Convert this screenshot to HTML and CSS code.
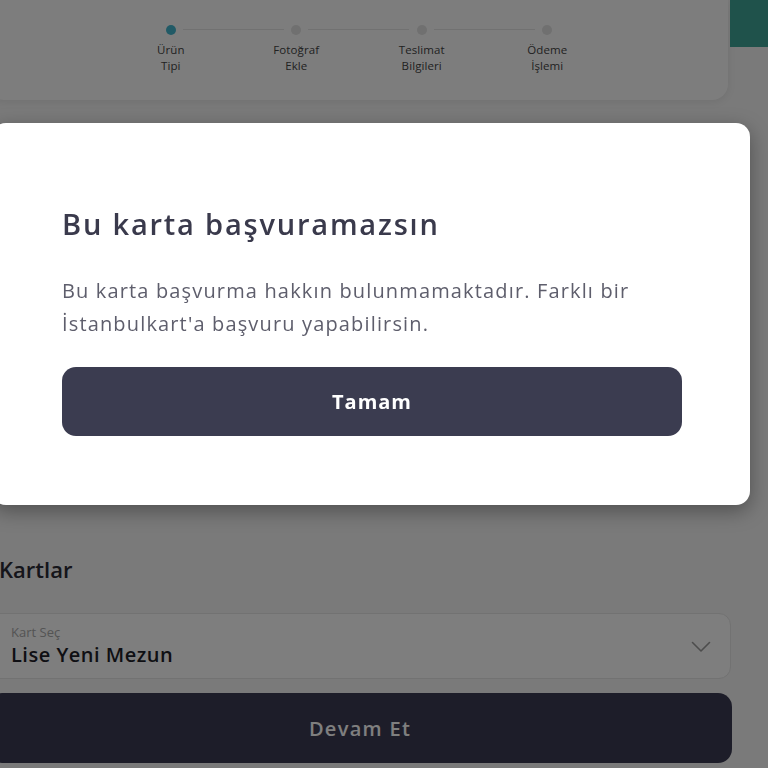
FILE: index.html
```html
<!DOCTYPE html>
<html lang="tr">
<head>
<meta charset="utf-8">
<title>Kart Başvurusu</title>
<link rel="stylesheet" href="styles.css">
</head>
<body>
<div class="layout">
  <main class="main">
    <section class="stepper-card">
      <ol class="stepper">
        <li class="step active"><span class="dot"></span><span class="label">Ürün<br>Tipi</span></li>
        <li class="step"><span class="dot"></span><span class="label">Fotoğraf<br>Ekle</span></li>
        <li class="step"><span class="dot"></span><span class="label">Teslimat<br>Bilgileri</span></li>
        <li class="step last"><span class="dot"></span><span class="label">Ödeme<br>İşlemi</span></li>
      </ol>
    </section>
    <section class="form">
      <h2 class="section-title">Kartlar</h2>
      <div class="select">
        <div class="select-text">
          <span class="select-label">Kart Seç</span>
          <span class="select-value">Lise Yeni Mezun</span>
        </div>
        <svg class="chevron" width="20" height="12" viewBox="0 0 20 12"><path d="M1.5 1.5 L10 10 L18.5 1.5" fill="none" stroke="#9a9a9a" stroke-width="1.6" stroke-linecap="round" stroke-linejoin="round"/></svg>
      </div>
      <button class="primary">Devam Et</button>
    </section>
  </main>
  <aside class="side"><div class="teal"></div></aside>
</div>
<div class="overlay"></div>
<div class="modal">
  <h1 class="modal-title">Bu karta başvuramazsın</h1>
  <p class="modal-text">Bu karta başvurma hakkın bulunmamaktadır. Farklı bir İstanbulkart'a başvuru yapabilirsin.</p>
  <button class="modal-btn">Tamam</button>
</div>
</body>
</html>
```

FILE: styles.css
```css
* { box-sizing: border-box; }
html, body { margin: 0; padding: 0; }
body {
  width: 768px;
  height: 768px;
  overflow: hidden;
  background: #f4f4f4;
  font-family: "Open Sans", "Noto Sans", sans-serif;
  color: #2a2a3a;
}
.layout { display: flex; height: 768px; }
.main {
  width: 744px;
  margin-left: -12px;
  flex: none;
  display: flex;
  flex-direction: column;
}
.side { flex: 1; }
.teal { height: 47px; background: #3fa596; margin-left: -2px; }

.stepper-card {
  height: 100px;
  margin-right: 4px;
  background: #fbfbfb;
  border-radius: 0 0 16px 16px;
  box-shadow: 0 2px 8px rgba(0,0,0,0.08);
  padding-top: 25px;
}
.stepper {
  list-style: none;
  margin: 0;
  padding: 0 0 0 2px;
  display: flex;
  justify-content: center;
}
.step {
  width: 125.5px;
  display: flex;
  flex-direction: column;
  align-items: center;
  position: relative;
}
.step::after {
  content: "";
  position: absolute;
  top: 4px;
  left: calc(50% + 12px);
  width: 101px;
  height: 1px;
  background: #e2e2e2;
}
.step.last::after { display: none; }
.dot {
  width: 10px;
  height: 10px;
  border-radius: 50%;
  background: #e0e0e0;
}
.step.active .dot { background: #43b4cc; }
.label {
  margin-top: 7px;
  font-size: 11.5px;
  line-height: 16px;
  text-align: center;
  color: #444;
  letter-spacing: 0.1px;
}

.form {
  display: flex;
  flex-direction: column;
  padding: 455px 0 0 0;
}
.section-title {
  margin: 0 0 30px 11px;
  font-size: 22px;
  font-weight: 600;
  line-height: 28px;
  color: #2a2a34;
}
.select {
  height: 66px;
  margin-right: 1px;
  border: 1px solid #e4e4e4;
  border-radius: 12px;
  background: #fcfcfc;
  display: flex;
  align-items: center;
  justify-content: space-between;
  padding: 0 19px 0 22px;
}
.select-text { display: flex; flex-direction: column; padding-top: 0; }
.select-label { font-size: 13px; line-height: 18px; color: #a8a8a8; }
.select-value { font-size: 20px; line-height: 28px; font-weight: 600; color: #1e1e28; letter-spacing: 0.5px; }
.chevron { margin-top: 2px; }
.primary {
  margin-top: 14px;
  height: 70px;
  border: none;
  border-radius: 14px;
  background: #3a3a52;
  color: #ffffff;
  font-family: inherit;
  font-size: 20px;
  font-weight: 600;
  letter-spacing: 1.3px;
}

.overlay {
  position: fixed;
  inset: 0;
  background: rgba(0,0,0,0.5);
}
.modal {
  position: absolute;
  top: 123px;
  left: -8px;
  width: 758px;
  height: 382px;
  background: #ffffff;
  border-radius: 14px;
  box-shadow: 0 6px 20px rgba(0,0,0,0.35);
  padding: 81px 68px 0 70px;
}
.modal-title {
  margin: 0;
  font-size: 29px;
  line-height: 40px;
  font-weight: 600;
  color: #3a3a4c;
  letter-spacing: 1.8px;
}
.modal-text {
  margin: 30px 0 0 0;
  font-size: 20px;
  line-height: 33px;
  color: #5e5e6c;
  letter-spacing: 1.15px;
}
.modal-btn {
  display: block;
  width: 100%;
  margin-top: 27px;
  height: 69px;
  border: none;
  border-radius: 14px;
  background: #3b3c50;
  color: #ffffff;
  font-family: inherit;
  font-size: 20px;
  font-weight: 700;
  letter-spacing: 1px;
}
```
